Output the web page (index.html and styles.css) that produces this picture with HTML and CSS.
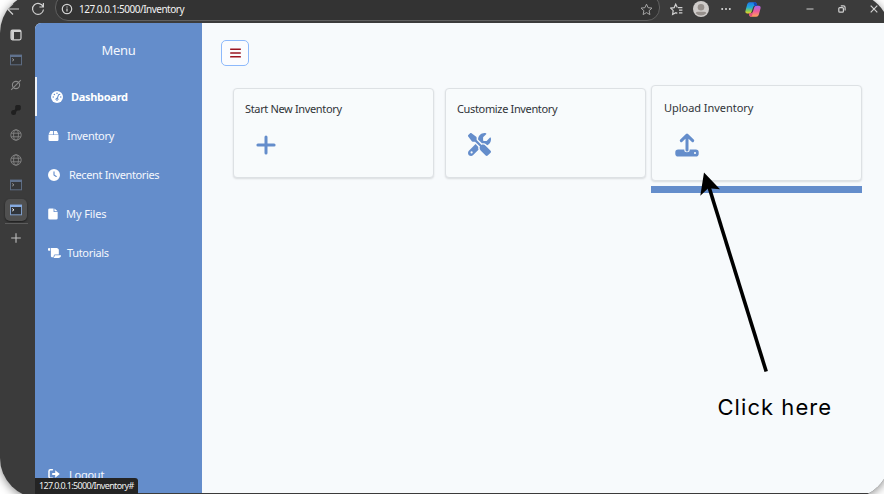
FILE: index.html
```html
<!DOCTYPE html>
<html lang="en">
<head>
<meta charset="utf-8">
<title>Inventory</title>
<link rel="stylesheet" href="styles.css">
</head>
<body>
<div class="window">
  <header class="toolbar">
    <svg class="back" width="14" height="14" viewBox="0 0 14 14"><path d="M13 7H1.5M7 1.5L1.5 7L7 12.5"/></svg>
    <svg class="reload" width="14" height="14" viewBox="0 0 14 14"><path d="M12.2 5A5.5 5.5 0 1 0 12.5 7.5M12.4 1V5H8.4"/></svg>
    <div class="address">
      <svg width="12" height="12" viewBox="0 0 12 12"><circle cx="6" cy="6" r="4.7"/><path d="M6 5.4V8.4M6 3.4V4.4"/></svg>
      <span class="url">127.0.0.1:5000/Inventory</span>
      <svg class="star" width="13" height="13" viewBox="0 0 13 13"><path d="M6.5 1.2L8.1 4.7L12 5.1L9.1 7.7L9.9 11.6L6.5 9.6L3.1 11.6L3.9 7.7L1 5.1L4.9 4.7Z"/></svg>
    </div>
    <svg class="favs" width="13" height="13" viewBox="0 0 13 13"><path d="M8 4.6H12.4M9 7.2H12.4M9 9.8H12.4M7.3 4.4L5.7 1.2L4.2 4.6L.8 5.1L3.2 7.6L2.6 11.4L5.9 9.7L7.3 10.4"/></svg>
    <svg class="avatar" width="16" height="16" viewBox="0 0 16 16"><circle cx="8" cy="8" r="8" fill="#cfccca"/><circle cx="8" cy="6.3" r="3.3" fill="#96908c"/><path d="M2.7 12.2Q3 10.8 5 10.8H11Q13 10.8 13.3 12.2A7.3 7.3 0 0 1 2.7 12.2Z" fill="#96908c"/></svg>
    <svg class="dots" width="10" height="4" viewBox="0 0 10 4"><circle cx="1.2" cy="2" r="1"/><circle cx="5" cy="2" r="1"/><circle cx="8.8" cy="2" r="1"/></svg>
    <svg class="copilot" width="16" height="15" viewBox="0 0 16 15">
      <defs>
        <linearGradient id="cool" x1="0" y1="0" x2="0" y2="1"><stop offset="0" stop-color="#1e78e8"/><stop offset=".45" stop-color="#22a9d8"/><stop offset=".75" stop-color="#83ca56"/><stop offset="1" stop-color="#f5cf25"/></linearGradient>
        <linearGradient id="warm" x1="0" y1="0" x2="0" y2="1"><stop offset="0" stop-color="#a766e8"/><stop offset=".5" stop-color="#ed5a9c"/><stop offset="1" stop-color="#ffa15a"/></linearGradient>
      </defs>
      <path fill="url(#cool)" d="M4.7 .3H10Q11.3 .3 11.8 2L12.3 4H9.5Q8.4 4 8 5.4L6.5 10Q6 11.5 4.5 11.5H2.2Q-.2 11.5 .5 8.7L2.2 2.3Q2.8 .3 4.7 .3Z"/>
      <path fill="url(#warm)" d="M11.3 14.7H6Q4.6 14.7 4.2 13.1L3.9 11.5H6Q7.4 11.5 7.8 10.1L9.3 5.3Q9.8 3.8 11.3 3.8H13.8Q16.2 3.8 15.5 6.5L13.8 12.7Q13.2 14.7 11.3 14.7Z"/>
      <path fill="#1749b8" d="M8.4 .3H10Q11.3 .3 11.8 2L12.3 4H9.5Z"/>
      <path fill="#e0507c" d="M3.9 11.5H6Q7.4 11.5 7.8 10.1L8 9.5L6.8 14.7H6Q4.6 14.7 4.2 13.1Z"/>
    </svg>
    <svg class="winctl min" width="8" height="8" viewBox="0 0 8 8"><path d="M.5 4H7.5"/></svg>
    <svg class="winctl max" width="8" height="8" viewBox="0 0 8 8"><rect x=".8" y="2.6" width="4.6" height="4.6" rx="1"/><path d="M2.8 .9H5.4Q7.1 .9 7.1 2.6V5.4"/></svg>
    <svg class="winctl close" width="8" height="8" viewBox="0 0 8 8"><path d="M.7 .7L7.3 7.3M7.3 .7L.7 7.3"/></svg>
  </header>
  <div class="body">
    <nav class="tabs">
      <div class="tab"><svg width="12" height="12" viewBox="0 0 12 12"><rect x="1" y="1.2" width="10" height="9.6" rx="1.5" fill="none" stroke="#d2d2d2" stroke-width="1.2"/><path d="M1.2 1.2H4V10.8H1.2ZM1.2 1H11V3H1.2Z" fill="#d2d2d2"/></svg></div>
      <div class="tab"><svg class="dim" width="12" height="12" viewBox="0 0 12 12"><use href="#console"/></svg></div>
      <div class="tab"><svg width="12" height="12" viewBox="0 0 12 12" stroke="#8a8a8a" stroke-width="1.1"><circle cx="6" cy="6" r="3.6"/><path d="M1.2 10.8L10.8 1.2"/></svg></div>
      <div class="tab"><svg width="12" height="12" viewBox="0 0 12 12"><g fill="#202020"><rect x="5.2" y="1" width="5.6" height="5.4" rx="1.6"/><circle cx="3.6" cy="8.4" r="2.5"/><path d="M3 7L6.600 4L7.400 6.400L5 9Z"/></g></svg></div>
      <div class="tab"><svg class="globe" width="12" height="12" viewBox="0 0 12 12"><use href="#globe"/></svg></div>
      <div class="tab"><svg class="globe" width="12" height="12" viewBox="0 0 12 12"><use href="#globe"/></svg></div>
      <div class="tab"><svg class="dim" width="12" height="12" viewBox="0 0 12 12"><use href="#console"/></svg></div>
      <div class="tab"><div class="active-tab"><svg width="12" height="12" viewBox="0 0 12 12"><g id="console"><rect x=".5" y="1.2" width="11" height="9.6" fill="#30343a" stroke="#7f9dc8"/><path d="M0 .8H12V3H0Z" fill="#86aae0"/><path d="M2.2 4.500L4 5.800L2.200 7.100" fill="none" stroke="#eee"/></g></svg></div></div>
      <div class="rule"></div>
      <svg class="add" width="10" height="10" viewBox="0 0 10 10"><path d="M5 .2V9.8M.2 5H9.8"/></svg>
      <svg width="0" height="0"><defs><g id="globe"><circle cx="6" cy="6" r="5.2"/><ellipse cx="6" cy="6" rx="2.4" ry="5.2"/><path d="M1.2 4.2H10.8M1.2 7.8H10.8"/></g></defs></svg>
    </nav>
    <div class="page">
      <aside class="sidebar">
        <h1 class="menu-title">Menu</h1>
        <a class="item current"><svg width="12" height="12" viewBox="0 0 512 512"><circle cx="256" cy="256" r="256" fill="#fff"/><g fill="#648dcb"><circle cx="256" cy="96" r="32"/><circle cx="144" cy="144" r="32"/><circle cx="96" cy="256" r="32"/><circle cx="416" cy="256" r="32"/><circle cx="368" cy="144" r="28"/><circle cx="256" cy="352" r="60"/></g><path d="M256 352L325 155" stroke="#648dcb" stroke-width="44" stroke-linecap="round"/><circle cx="256" cy="352" r="26" fill="#fff"/></svg><span>Dashboard</span></a>
        <a class="item"><svg width="11" height="12" viewBox="0 0 11 12"><path d="M2.2 1H5.1V4.4H.5ZM5.9 1H8.8L10.5 4.4H5.9ZM.5 5.1H10.5V9.8Q10.5 11 9.3 11H1.7Q.5 11 .5 9.8Z" fill="#fff"/></svg><span>Inventory</span></a>
        <a class="item recent"><svg width="12" height="12" viewBox="0 0 512 512"><path fill="#fff" fill-rule="evenodd" d="M256 0a256 256 0 1 1 0 512A256 256 0 1 1 256 0zM232 120V256c0 8 4 15.500 10.700 20l96 64c11 7.400 25.900 4.400 33.300-6.700s4.400-25.900-6.700-33.300L280 243.200V120c0-13.300-10.700-24-24-24s-24 10.700-24 24z"/></svg><span>Recent Inventories</span></a>
        <a class="item files"><svg width="10" height="12" viewBox="0 0 9 12" preserveAspectRatio="none"><path d="M1.500 .4H5V3.600Q5 4.100 5.500 4.100H8.700V10.300Q8.700 11.600 7.400 11.600H1.500Q.2 11.600 .2 10.300V1.700Q.2 .4 1.500 .4ZM5.800 .4L8.700 3.300H5.800Z" fill="#fff"/></svg><span>My Files</span></a>
        <a class="item tutorials"><svg width="13" height="12" viewBox="0 0 576 512"><path fill="#fff" d="M0 80v48c0 17.700 14.300 32 32 32H96V80c0-26.500-21.500-48-48-48S0 53.500 0 80zM112 32c10 13.400 16 30 16 48V384c0 35.300 28.700 64 64 64s64-28.700 64-64v-5.300c0-32.400 26.300-58.700 58.700-58.700H480V128c0-53-43-96-96-96H112zM464 480c61.900 0 112-50.100 112-112c0-8.800-7.200-16-16-16H314.700c-14.700 0-26.700 11.900-26.700 26.700V384c0 53-43 96-96 96H368h96z"/></svg><span>Tutorials</span></a>
        <a class="item logout"><svg width="12" height="12" viewBox="0 0 12 12"><path d="M4.400 1.800H2.400Q1 1.800 1 3.200V8.800Q1 10.200 2.400 10.200H4.400" fill="none" stroke="#fff" stroke-width="1.500" stroke-linecap="round"/><path d="M4.200 4.900H7.200V2.300L11.800 6L7.200 9.700V7.100H4.200Z" fill="#fff"/></svg><span>Logout</span></a>
      </aside>
      <main class="content">
        <button class="toggle" aria-label="Toggle menu"><svg width="11" height="10" viewBox="0 0 11 10"><path d="M.7 1.200H10.300M.7 5H10.300M.7 8.800H10.300"/></svg></button>
        <section class="cards">
          <article class="card">
            <h2>Start New Inventory</h2>
            <svg class="plus" width="20" height="20" viewBox="0 0 20 20"><path d="M10 1.900V18.100M1.900 10H18.100"/></svg>
          </article>
          <article class="card">
            <h2>Customize Inventory</h2>
            <svg class="tools" width="23" height="23" viewBox="0 0 512 512"><path fill-rule="evenodd" d="M78.600 5C69.100-2.400 55.600-1.500 47 7L7 47c-8.500 8.500-9.400 22-2.100 31.600l80 104c4.500 5.900 11.600 9.400 19 9.400h54.100l109 109c-14.700 29-10 65.400 14.300 89.600l112 112c12.500 12.500 32.800 12.500 45.300 0l64-64c12.500-12.500 12.500-32.800 0-45.300l-112-112c-24.200-24.200-60.600-29-89.600-14.300l-109-109V104c0-7.500-3.500-14.500-9.400-19L78.600 5zM19.900 396.100C7.200 408.800 0 426.100 0 444.100C0 481.600 30.400 512 67.900 512c18 0 35.300-7.200 48-19.900L233.700 374.300c-7.800-20.900-9-43.600-3.600-65.100l-61.700-61.700L19.900 396.100zM512 144c0-10.500-1.100-20.700-3.200-30.500c-2.400-11.200-16.100-14.100-24.200-6l-63.900 63.900c-3 3-7.100 4.700-11.300 4.700H352c-8.800 0-16-7.200-16-16V102.600c0-4.200 1.700-8.300 4.700-11.300l63.900-63.900c8.100-8.100 5.200-21.800-6-24.200C388.700 1.100 378.500 0 368 0C288.500 0 224 64.500 224 144l0 .8 85.300 85.300c36-9.100 75.800 .5 104 28.700L429 274.500c49-23 83-72.800 83-130.500zM56 432a24 24 0 1 1 48 0 24 24 0 1 1 -48 0z"/></svg>
          </article>
          <article class="card hover">
            <h2>Upload Inventory</h2>
            <svg class="upload" width="24" height="24" viewBox="0 0 24 24"><path d="M3.200 16.500H9.300V17Q9.300 19.200 12 19.200T14.700 17V16.500H20.800Q23.700 16.500 23.700 19.300V20.700Q23.700 23.500 20.800 23.500H3.200Q.3 23.500 .3 20.700V19.300Q.3 16.500 3.200 16.500Z"/><path class="up" d="M12 17V2.300M6.300 7.600L12 2.100L17.700 7.600"/><circle cx="20" cy="20" r="1.100" fill="#f7fafc"/></svg>
          </article>
        </section>
      </main>
    </div>
  </div>
  <div class="status">127.0.0.1:5000/Inventory#</div>
</div>
<svg class="arrow" width="884" height="494" viewBox="0 0 884 494"><path d="M766.200 371.500L709 187" stroke="#000" stroke-width="3.600"/><path d="M704 172.500L720 189.300L708.200 188.300L700.300 195.700Z"/></svg>
<p class="note">Click here</p>
</body>
</html>
```
FILE: styles.css
```css
* { box-sizing: border-box; }
body { margin: 0; width: 884px; height: 494px; overflow: hidden; position: relative; background: #fff; font-family: "Noto Sans", "Open Sans", sans-serif; }
h1, h2, p { margin: 0; font-weight: 400; }
svg { display: block; flex: none; fill: none; }
.window { position: absolute; left: 0; top: -7px; width: 890px; height: 505px; border-radius: 40px; overflow: hidden; background: #3b3b3b; box-shadow: 0 2px 10px rgba(0,0,0,.45); display: flex; flex-direction: column; }
.toolbar { height: 30px; flex: none; padding-top: 2px; display: flex; align-items: center; stroke: #d0d0d0; stroke-width: 1.2; }
.back { margin-left: 6px; }
.reload { margin-left: 11px; }
.address { width: 605px; height: 27px; margin: -4px 0 0 10px; padding: 4px 6px 0 5px; border: 1px solid #606060; border-radius: 13px; background: #333; display: flex; align-items: center; }
.url { margin-left: 6px; flex: 1; color: #f4f4f4; font-size: 10px; white-space: nowrap; letter-spacing: -.5px; }
.star { stroke: #a5a5a5; stroke-width: 1; }
.favs { margin-left: 10px; }
.avatar { margin-left: 10px; stroke: none; }
.dots { margin-left: 12px; fill: #ddd; stroke: none; }
.copilot { margin-left: 14px; stroke: none; }
.min { margin-left: 45px; }
.max { margin-left: 24px; }
.close { margin-left: 24px; }
.body { flex: 1; min-height: 0; display: flex; }
.tabs { width: 35px; flex: none; padding-right: 3px; display: flex; flex-direction: column; align-items: center; }
.tab { height: 25px; flex: none; display: flex; align-items: center; }
.tab:first-child { height: 24px; }
.dim { opacity: .5; }
.globe { stroke: #858585; stroke-width: .9; }
.active-tab { width: 22px; height: 22px; border-radius: 5px; background: #505050; box-shadow: 0 1px 2px #1c1c1c; display: flex; align-items: center; justify-content: center; }
.rule { width: 23px; height: 1px; margin-top: 1px; background: #5c5c5c; }
.add { margin-top: 9px; stroke: #c0c0c0; stroke-width: 1.1; }
.page { flex: 1; height: 470px; display: flex; border-top-left-radius: 6px; overflow: hidden; background: #f7fafc; }
.sidebar { width: 167px; flex: none; background: #648dcb; display: flex; flex-direction: column; color: #f4f7fd; font-size: 11px; letter-spacing: -.33px; }
.menu-title { height: 54px; line-height: 54px; text-align: center; font-size: 13px; letter-spacing: -.3px; }
.item { height: 39px; flex: none; padding-left: 13px; display: flex; align-items: center; white-space: nowrap; gap: 8px; }
.current { border-left: 2px solid #edf1f8; color: #fff; font-weight: 700; letter-spacing: -.3px; padding-left: 14px; }
.recent { gap: 9px; letter-spacing: -.36px; }
.files { letter-spacing: -.1px; }
.tutorials { gap: 6px; }
.logout { margin-top: auto; height: 38px; gap: 9px; letter-spacing: -.25px; }
.content { flex: 1; padding: 17px 28px 0 19px; }
.toggle { width: 28px; height: 26px; padding: 0; border: 1px solid #8db9fb; border-radius: 5px; background: #fbfcfe; display: flex; align-items: center; justify-content: center; stroke: #9b1521; stroke-width: 1.5; stroke-linecap: round; }
.cards { margin: 22px 0 0 12px; display: flex; gap: 11px; color: #303438; }
.card { width: 201px; height: 90px; padding: 11px; border: 1px solid #dde1e4; border-radius: 4px; background: #f8fbfc; box-shadow: 0 1px 2px rgba(0,0,0,.12); }
.card h2 { font-size: 11px; line-height: 17px; white-space: nowrap; letter-spacing: -.35px; }
.plus { margin: 17.5px 0 0 11px; stroke: #648dcb; stroke-width: 3; stroke-linecap: round; }
.tools { margin: 16px 0 0 10.5px; fill: #648dcb; }
.upload { margin: 17px 0 0 11px; fill: #648dcb; }
.up { fill: none; stroke: #648dcb; stroke-width: 3; stroke-linecap: round; stroke-linejoin: round; }
.hover { width: 211px; height: 96px; margin: -3px 0 0 -6px; padding: 13px 12px; position: relative; }
.hover h2 { letter-spacing: -.04px; }
.hover::after { content: ""; position: absolute; left: -1px; right: -1px; top: 100px; height: 7px; background: #648dcb; }
.status { position: absolute; left: 35px; top: 485px; width: 103px; height: 16px; padding-left: 4px; border-radius: 0 3px 0 0; background: #242424; color: #f0f0f0; font-size: 9px; line-height: 16px; letter-spacing: -.66px; white-space: nowrap; }
.arrow { position: absolute; left: 0; top: 0; fill: #000; }
.note { position: absolute; left: 717.5px; top: 392px; color: #000; font-family: Inter, sans-serif; font-size: 22px; line-height: 30px; letter-spacing: 1.05px; white-space: nowrap; }
```
